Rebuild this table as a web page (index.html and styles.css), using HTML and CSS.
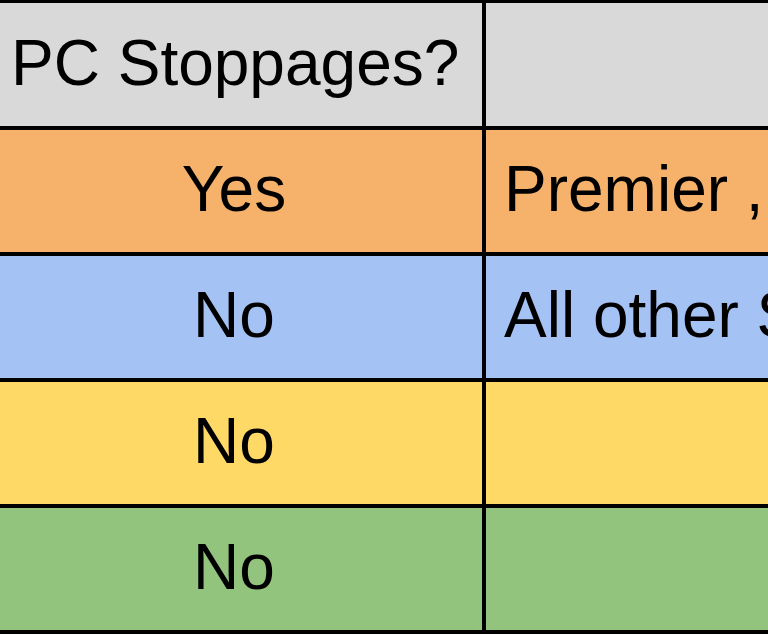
FILE: index.html
```html
<!DOCTYPE html>
<html>
<head>
<meta charset="utf-8">
<link rel="stylesheet" href="styles.css">
</head>
<body>
<div class="sheet">
  <div class="row header">
    <div class="cell c1 left">PC Stoppages?</div>
    <div class="cell c2"></div>
  </div>
  <div class="row orange">
    <div class="cell c1">Yes</div>
    <div class="cell c2">Premier , Championship</div>
  </div>
  <div class="row blue">
    <div class="cell c1">No</div>
    <div class="cell c2">All other Sections</div>
  </div>
  <div class="row yellow">
    <div class="cell c1">No</div>
    <div class="cell c2"></div>
  </div>
  <div class="row green">
    <div class="cell c1">No</div>
    <div class="cell c2"></div>
  </div>
</div>
</body>
</html>
```

FILE: styles.css
```css
html, body {
  margin: 0;
  padding: 0;
  background: #ffffff;
  overflow: hidden;
}

.sheet {
  width: 768px;
  overflow: hidden;
  border-top: 3px solid #000;
  font-family: "Liberation Sans", Arial, sans-serif;
  font-size: 64px;
  color: #000;
}

.row {
  display: flex;
  height: 122px;
  border-bottom: 4px solid #000;
}

.header { height: 123px; }
.header .cell { background: #d9d9d9; }
.orange .cell { background: #f6b26b; }
.blue .cell { background: #a4c2f4; }
.yellow .cell { background: #ffd966; }
.green .cell { background: #93c47d; }

.cell {
  display: flex;
  align-items: center;
  white-space: nowrap;
  overflow: hidden;
  padding-bottom: 4px;
  box-sizing: border-box;
}

.c1 {
  flex: 0 0 500px;
  margin-left: -14px;
  justify-content: center;
  border-right: 4px solid #000;
}

.c1.left {
  justify-content: flex-start;
  padding-left: 25px;
}

.c2 {
  flex: 1 0 auto;
  padding-left: 18px;
}
```
